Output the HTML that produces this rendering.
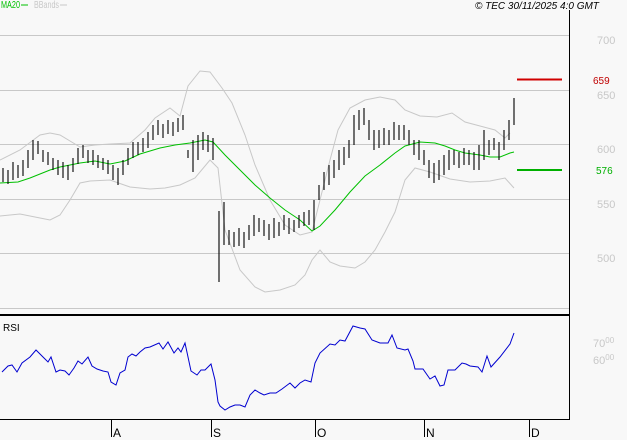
<!DOCTYPE html>
<html><head><meta charset="utf-8"><style>
html,body{margin:0;padding:0;background:#f8f8f8;}
svg{display:block;font-family:"Liberation Sans",sans-serif;}
</style></head><body>
<svg width="627" height="440" viewBox="0 0 627 440" xmlns="http://www.w3.org/2000/svg">
<rect width="627" height="440" fill="#f8f8f8"/>
<g stroke="#c8c8c8" stroke-width="1">
<line x1="0" y1="35.5" x2="569" y2="35.5"/>
<line x1="0" y1="90.5" x2="569" y2="90.5"/>
<line x1="0" y1="144.5" x2="569" y2="144.5"/>
<line x1="0" y1="199.5" x2="569" y2="199.5"/>
<line x1="0" y1="253.5" x2="569" y2="253.5"/>
<line x1="0" y1="308.5" x2="569" y2="308.5"/>
</g>
<line x1="569.5" y1="10" x2="569.5" y2="420" stroke="#000"/>
<line x1="0" y1="315" x2="570" y2="315" stroke="#000" stroke-width="2"/>
<line x1="0" y1="419.5" x2="570" y2="419.5" stroke="#000"/>
<g stroke="#000" stroke-width="1">
<line x1="111.5" y1="419" x2="111.5" y2="437"/>
<line x1="211.5" y1="419" x2="211.5" y2="437"/>
<line x1="315.5" y1="419" x2="315.5" y2="437"/>
<line x1="424.5" y1="419" x2="424.5" y2="437"/>
<line x1="529.5" y1="419" x2="529.5" y2="437"/>
</g>
<g font-size="12" fill="#000">
<text x="113" y="437">A</text><text x="213" y="437">S</text><text x="317" y="437">O</text><text x="426" y="437">N</text><text x="531" y="437">D</text>
</g>
<g font-size="11" fill="#c8c8c8">
<text x="597" y="44">700</text><text x="597" y="99">650</text><text x="597" y="153">600</text><text x="597" y="208">550</text><text x="597" y="262">500</text>
<text x="593" y="347">70<tspan font-size="8" dy="-4">00</tspan></text>
<text x="593" y="364">60<tspan font-size="8" dy="-4">00</tspan></text>
</g>
<text x="1" y="8" font-size="10" fill="#00c000" textLength="19" lengthAdjust="spacingAndGlyphs">MA20</text>
<line x1="21" y1="5" x2="28" y2="5" stroke="#00c000"/>
<text x="34" y="8" font-size="10" fill="#c8c8c8" textLength="25" lengthAdjust="spacingAndGlyphs">BBands</text>
<line x1="60" y1="5" x2="67" y2="5" stroke="#c8c8c8"/>
<text x="475" y="9" font-size="10" font-style="italic" fill="#000">© TEC 30/11/2025 4:0 GMT</text>
<text x="3" y="331" font-size="10" fill="#000">RSI</text>
<line x1="517" y1="79.5" x2="562" y2="79.5" stroke="#d00000" stroke-width="2"/>
<text x="593" y="84" font-size="10" fill="#c00000">659</text>
<line x1="517" y1="170" x2="562" y2="170" stroke="#00b000" stroke-width="2"/>
<text x="596" y="174" font-size="10" fill="#00b000">576</text>
<polyline fill="none" stroke="#c8c8c8" points="0,160 20,150 40,135 50,133 60,135 80,147 95,145 110,144 130,143 145,130 155,118 170,108 180,116 188,86 200,71 210,72 222,88 232,103 245,135 255,165 270,200 285,225 300,235 312,232 320,200 330,160 338,130 350,108 365,100 380,97 395,100 405,110 420,116 437,117 452,113 465,122 480,126 495,130 505,138 510,133"/>
<polyline fill="none" stroke="#c8c8c8" points="0,216 20,214 40,218 50,220 60,215 70,200 80,183 90,181 110,180 130,187 150,189 165,188 180,185 195,178 210,160 218,168 225,230 240,270 255,287 265,292 280,290 295,285 305,275 312,260 320,250 330,262 340,266 355,268 365,262 375,250 385,232 395,212 405,180 415,168 430,172 450,179 470,182 490,181 505,178 514,188"/>
<polyline fill="none" stroke="#00c000" points="0,183 18,182 30,178 40,174 50,170 60,167 70,165 80,163 95,161 110,164 125,161 140,154 160,148 175,145 190,143 205,140 213,142 225,155 240,170 255,185 270,198 285,210 300,220 312,231 320,226 335,210 350,192 365,176 380,165 395,153 405,146 420,142 435,143 445,146 455,150 465,153 480,155 490,157 500,157 510,153 514,152"/>
<path fill="none" stroke="#000" stroke-width="1.1" d="
M3,168V182 M8,170V184 M13,162V180 M18,165V178 M23,160V176 M28,150V168 M33,140V160 M38,141V154 M43,150V162 M48,152V165 M53,158V170 M58,160V175 M63,162V178 M68,165V180 M73,158V172 M78,148V164 M83,145V158 M88,150V163 M93,150V165 M98,155V168 M103,158V170 M108,160V174 M113,165V180 M118,168V185 M123,160V175 M128,148V165 M133,142V158 M138,142V155 M143,138V152 M148,132V148 M153,125V140 M158,120V135 M163,124V138 M168,120V134 M173,122V136 M178,118V132 M183,115V130 M188,150V158 M193,140V172 M198,135V160 M203,132V150 M208,135V152 M213,138V160 M219,211V282 M224,202V245 M229,230V245 M234,232V247 M239,228V246 M244,232V248 M249,225V240 M254,215V236 M259,218V232 M264,220V236 M269,224V240 M274,218V238 M279,222V236 M284,215V230 M289,218V234 M294,220V232 M299,215V228 M304,212V226 M309,210V225 M314,200V230 M319,185V200 M324,172V190 M329,165V185 M334,160V178 M339,150V170 M344,147V165 M349,140V158 M354,115V145 M359,110V130 M364,108V125 M369,120V140 M374,130V150 M379,130V148 M384,128V145 M389,130V145 M394,122V140 M399,125V140 M404,125V140 M409,130V145 M414,140V155 M419,140V160 M424,150V165 M429,160V178 M434,163V183 M439,160V180 M444,155V175 M449,150V170 M454,150V165 M459,152V168 M464,148V165 M469,150V165 M474,152V170 M479,145V170 M484,130V160 M489,140V155 M494,138V150 M499,142V160 M504,130V150 M509,120V140 M514,98V125"/>
<polyline fill="none" stroke="#0000d0" points="2,372 8,366 12,365 17,372 22,363 30,357 36,350 44,358 48,362 51,357 56,372 60,370 65,371 69,375 74,368 78,361 82,364 88,357 92,366 97,369 103,371 108,372 111,382 116,385 120,373 125,370 128,357 132,354 136,356 140,352 145,348 150,347 159,343 163,349 168,342 174,353 178,348 181,352 185,343 191,371 197,375 201,370 205,370 211,364 215,380 218,402 220,406 225,410 230,407 235,405 240,405 245,407 250,395 255,390 260,393 264,395 270,393 276,393 282,389 290,383 295,388 300,383 305,380 311,382 315,363 320,353 330,344 335,345 340,340 345,341 353,326 360,328 365,329 372,340 380,343 388,343 392,335 397,348 405,350 408,349 413,361 415,369 423,369 430,379 435,376 440,386 444,385 448,370 455,370 462,363 466,364 470,366 478,367 482,372 487,356 491,367 500,357 510,344 514,333"/>
</svg>
</body></html>
